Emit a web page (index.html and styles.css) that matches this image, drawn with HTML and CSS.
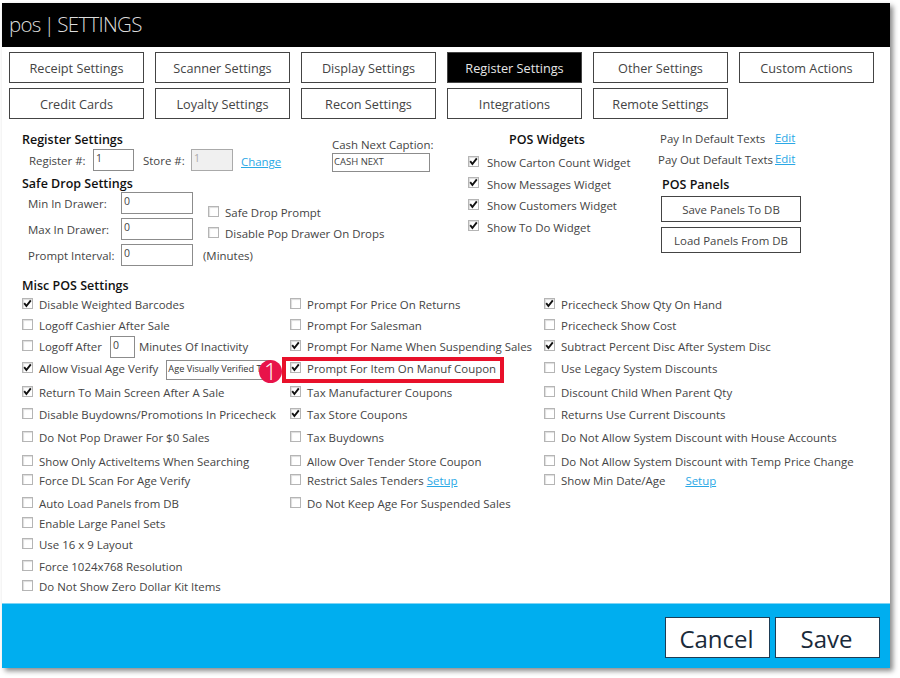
FILE: index.html
```html
<!DOCTYPE html>
<html lang="en">
<head>
<meta charset="utf-8">
<title>pos | SETTINGS</title>
<link rel="stylesheet" href="styles.css">
</head>
<body>
<svg width="0" height="0" class="defs"><symbol id="tick" viewBox="0 0 11 11"><path d="M2.2 5.2 4.4 8 8.8 2.4" fill="none" stroke="#111" stroke-width="1.9"/></symbol></svg>
<div class="window">
  <header class="titlebar">pos | SETTINGS</header>
  <nav class="tabs">
    <button class="tab">Receipt Settings</button>
    <button class="tab">Scanner Settings</button>
    <button class="tab">Display Settings</button>
    <button class="tab active">Register Settings</button>
    <button class="tab">Other Settings</button>
    <button class="tab">Custom Actions</button>
    <button class="tab">Credit Cards</button>
    <button class="tab">Loyalty Settings</button>
    <button class="tab">Recon Settings</button>
    <button class="tab">Integrations</button>
    <button class="tab">Remote Settings</button>
  </nav>
  <main class="content">
    <section class="upper">
      <div class="col-register">
        <h3>Register Settings</h3>
        <div class="reg-row">
          <span class="reg-label">Register #:</span><span class="input reg-input">1</span>
          <span class="store-label">Store #:</span><span class="input reg-input disabled">1</span>
          <a class="link change">Change</a>
        </div>
        <h3 class="safe-title">Safe Drop Settings</h3>
        <div class="safe-grid">
          <span class="safe-label">Min In Drawer:</span><span class="input">0</span>
          <div class="safe-checks">
            <label class="check"><span class="box"></span>Safe Drop Prompt</label>
            <label class="check"><span class="box"></span>Disable Pop Drawer On Drops</label>
          </div>
          <span class="safe-label">Max In Drawer:</span><span class="input">0</span>
          <span class="safe-label">Prompt Interval:</span><span class="input">0</span>
          <span class="minutes">(Minutes)</span>
        </div>
      </div>
      <div class="col-cash">
        <div class="cash-label">Cash Next Caption:</div>
        <span class="input cash-input">CASH NEXT</span>
      </div>
      <div class="col-widgets">
        <h3 class="widgets-title">POS Widgets</h3>
        <label class="check widget"><span class="box"><svg><use href="#tick"/></svg></span>Show Carton Count Widget</label>
        <label class="check widget"><span class="box"><svg><use href="#tick"/></svg></span>Show Messages Widget</label>
        <label class="check widget"><span class="box"><svg><use href="#tick"/></svg></span>Show Customers Widget</label>
        <label class="check widget"><span class="box"><svg><use href="#tick"/></svg></span>Show To Do Widget</label>
      </div>
      <div class="col-panels">
        <div class="pay-row"><span class="pay-in">Pay In Default Texts</span><a class="link edit">Edit</a></div>
        <div class="pay-row"><span class="pay-out">Pay Out Default Texts</span><a class="link edit edit-out">Edit</a></div>
        <h3 class="panels-title">POS Panels</h3>
        <button class="panel-btn">Save Panels To DB</button>
        <button class="panel-btn">Load Panels From DB</button>
      </div>
    </section>
    <section class="misc">
      <h3>Misc POS Settings</h3>
      <div class="misc-cols">
        <div class="misc-col first">
          <label class="check"><span class="box"><svg><use href="#tick"/></svg></span>Disable Weighted Barcodes</label>
          <label class="check"><span class="box"></span>Logoff Cashier After Sale</label>
          <label class="check"><span class="box"></span>Logoff After<span class="input mini">0</span>Minutes Of Inactivity</label>
          <label class="check"><span class="box"><svg><use href="#tick"/></svg></span>Allow Visual Age Verify<span class="input age">Age Visually Verified Text</span></label>
          <label class="check"><span class="box"><svg><use href="#tick"/></svg></span>Return To Main Screen After A Sale</label>
          <label class="check"><span class="box"></span>Disable Buydowns/Promotions In Pricecheck</label>
          <label class="check"><span class="box"></span>Do Not Pop Drawer For $0 Sales</label>
          <label class="check"><span class="box"></span>Show Only ActiveItems When Searching</label>
          <label class="check"><span class="box"></span>Force DL Scan For Age Verify</label>
          <label class="check"><span class="box"></span>Auto Load Panels from DB</label>
          <label class="check"><span class="box"></span>Enable Large Panel Sets</label>
          <label class="check"><span class="box"></span>Use 16 x 9 Layout</label>
          <label class="check"><span class="box"></span>Force 1024x768 Resolution</label>
          <label class="check"><span class="box"></span>Do Not Show Zero Dollar Kit Items</label>
        </div>
        <div class="misc-col second">
          <label class="check"><span class="box"></span>Prompt For Price On Returns</label>
          <label class="check"><span class="box"></span>Prompt For Salesman</label>
          <label class="check"><span class="box"><svg><use href="#tick"/></svg></span>Prompt For Name When Suspending Sales</label>
          <label class="check"><span class="box"><svg><use href="#tick"/></svg></span>Prompt For Item On Manuf Coupon</label>
          <label class="check"><span class="box"><svg><use href="#tick"/></svg></span>Tax Manufacturer Coupons</label>
          <label class="check"><span class="box"><svg><use href="#tick"/></svg></span>Tax Store Coupons</label>
          <label class="check"><span class="box"></span>Tax Buydowns</label>
          <label class="check"><span class="box"></span>Allow Over Tender Store Coupon</label>
          <label class="check"><span class="box"></span>Restrict Sales Tenders<a class="link setup">Setup</a></label>
          <label class="check"><span class="box"></span>Do Not Keep Age For Suspended Sales</label>
        </div>
        <div class="misc-col third">
          <label class="check"><span class="box"><svg><use href="#tick"/></svg></span>Pricecheck Show Qty On Hand</label>
          <label class="check"><span class="box"></span>Pricecheck Show Cost</label>
          <label class="check"><span class="box"><svg><use href="#tick"/></svg></span>Subtract Percent Disc After System Disc</label>
          <label class="check"><span class="box"></span>Use Legacy System Discounts</label>
          <label class="check"><span class="box"></span>Discount Child When Parent Qty</label>
          <label class="check"><span class="box"></span>Returns Use Current Discounts</label>
          <label class="check"><span class="box"></span>Do Not Allow System Discount with House Accounts</label>
          <label class="check"><span class="box"></span>Do Not Allow System Discount with Temp Price Change</label>
          <label class="check"><span class="box"></span>Show Min Date/Age<a class="link setup date-setup">Setup</a></label>
        </div>
      </div>
      <div class="callout-box"></div>
      <div class="callout-badge">1</div>
    </section>
  </main>
  <footer class="actions">
    <button class="action">Cancel</button>
    <button class="action">Save</button>
  </footer>
</div>
</body>
</html>
```
FILE: styles.css
```css
* { box-sizing: border-box; }
html, body { margin: 0; height: 678px; overflow: hidden; background: #fff; }
body { font-family: "Open Sans", "Noto Sans", sans-serif; font-size: 11.45px; color: #444; }
.defs { position: absolute; }
button { font-family: inherit; cursor: default; }

.window { width: 888px; height: 665px; margin: 3px 0 0 2px; display: flex; flex-direction: column; background: #fff; box-shadow: 3px 3px 5px #8a8a8a; }
.titlebar { height: 44px; flex: none; background: #000; color: #dcdcdc; font-size: 20.5px; font-weight: 300; line-height: 42px; padding-left: 7px; letter-spacing: -0.7px; word-spacing: -1.5px; }

.tabs { display: grid; grid-template-columns: repeat(6, 135px); grid-auto-rows: 31px; column-gap: 11px; row-gap: 5px; padding: 5px 0 0 7px; flex: none; }
.tab { background: #fff; border: 1px solid #444; color: #444; font-size: 12.7px; padding: 0; }
.tab.active { background: #000; color: #e6e6e6; }

.content { flex: 1; min-height: 0; padding: 12px 0 0 20px; }
h3 { margin: 0; font-size: 12.5px; font-weight: 600; color: #111; line-height: 18px; }

.upper { display: flex; height: 146px; }
.col-register { width: 310px; flex: none; }
.reg-row { display: flex; align-items: center; height: 22px; margin-top: 0; }
.reg-label { width: 71px; padding-left: 7px; flex: none; white-space: nowrap; }
.store-label { width: 48px; margin-left: 9px; flex: none; white-space: nowrap; }
.input { display: block; flex: none; border: 1px solid #8c8c8c; background: #fff; font-size: 10.5px; line-height: 14px; padding: 1px 2px; color: #444; }
.reg-input { width: 41px; height: 22px; }
.reg-input.disabled { background: #f0f0f0; border-color: #aaa; color: #aaa; width: 42px; }
.link { color: #2aa8e6; text-decoration: underline; }
.change { margin-left: 8px; margin-top: 3px; }

.safe-title { margin-top: 4px; }
.safe-grid { display: grid; grid-template-columns: 99px 72px auto; grid-template-rows: 22px 22px 22px; row-gap: 4px; margin-top: -1px; align-items: center; }
.safe-grid .input { height: 22px; }
.safe-label { padding-left: 6px; white-space: nowrap; }
.safe-checks { grid-column: 3; grid-row: 1 / span 2; padding: 12px 0 0 15px; align-self: start; display: flex; flex-direction: column; gap: 4px; }
.minutes { padding-left: 10px; }

.check { display: flex; align-items: center; white-space: nowrap; height: 17px; }
.box { width: 11px; height: 11px; flex: none; margin-right: 6px; margin-top: -3px; border: 1px solid #b5b5b5; background: #fff; box-shadow: inset 1px 1px 1px #ddd; position: relative; }
.box svg { position: absolute; left: -1px; top: -1px; width: 11px; height: 11px; }

.col-cash { width: 136px; flex: none; padding-top: 5px; }
.cash-label { line-height: 17px; }
.cash-input { width: 98px; height: 19px; font-size: 9.5px; padding: 0 1px; line-height: 15px; }

.col-widgets { width: 191px; flex: none; }
.widgets-title { padding-left: 41px; margin-bottom: 5px; }
.widget { height: 17px; margin-bottom: 4.6px; }
.widget .box { margin-right: 8px; }

.col-panels { flex: none; }
.pay-row { display: flex; height: 21px; line-height: 16px; white-space: nowrap; }
.pay-in { padding-left: 1px; width: 115px; flex: none; }
.pay-out { width: 116px; margin-left: -1px; flex: none; }
.edit { margin-left: 1px; margin-top: -1px; }
.panels-title { margin-top: 3px; padding-left: 3px; }
.panel-btn { display: block; width: 140px; height: 26px; margin: 2px 0 5px 2px; background: #fff; border: 1px solid #444; color: #444; font-size: 11.45px; padding: 0; }

.misc { position: relative; }
.misc-cols { display: flex; margin-top: 1px; }
.misc-col { display: grid; grid-template-rows: 21px 21px 22px 24px 22px 23px 24px 19px 23px 20px 21px 22px 20px 17px; align-items: start; grid-auto-rows: 17px; }
.first { width: 268px; }
.second { width: 254px; }
.third { flex: none; }
.mini { width: 25px; height: 22px; margin: 0 4px 0 8px; }
.age { width: 105px; height: 20px; margin: 2px 0 0 8px; font-size: 9.2px; overflow: hidden; padding: 0 1px; line-height: 15px; color: #333; }
.setup { margin-left: 3px; }
.date-setup { margin-left: 20px; }

.callout-box { position: absolute; left: 260px; top: 80px; width: 222px; height: 26px; border: 4px solid #e8102a; }
.callout-badge { position: absolute; left: 237px; top: 83px; width: 23px; height: 23px; border-radius: 50%; background: #e8134a; color: #fff; font-size: 23px; font-weight: 300; line-height: 23px; text-align: center; }

.actions { flex: none; height: 65px; background: #00aeef; border-top: 1px solid #7fd4f5; display: flex; justify-content: flex-end; gap: 5px; padding: 13px 10px 0 0; }
.action { width: 105px; height: 41px; background: #fff; border: 1px solid #1d3c55; color: #1a2a3a; font-size: 24px; line-height: 1; padding: 2px 2px 0 0; }
```
